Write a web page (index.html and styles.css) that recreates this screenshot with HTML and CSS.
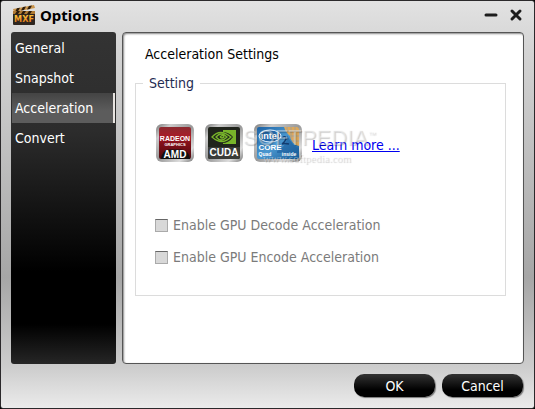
FILE: index.html
```html
<!DOCTYPE html>
<html lang="en">
<head>
    <meta charset="UTF-8">
    <meta name="viewport" content="width=device-width, initial-scale=1.0">
    <title>Options</title>
    <link rel="stylesheet" href="styles.css">
</head>
<body>
    <div class="window">
        <header class="titlebar">
            <svg class="logo" viewBox="0 0 24 20" aria-hidden="true">
                <defs>
                    <linearGradient id="gold" x1="0" y1="0" x2="0" y2="1">
                        <stop offset="0" stop-color="#ffd040"/>
                        <stop offset="1" stop-color="#e06a10"/>
                    </linearGradient>
                </defs>
                <path d="M1 4 L22 0 L23 3 L2 7 Z" fill="#c8934a"/>
                <path d="M5 3.2 L8 2.7 L6 6.2 L3 6.8 Z M11 2.1 L14 1.5 L12 5 L9 5.6 Z M17 1 L20 .4 L18 3.9 L15 4.5 Z" fill="#2b1c0c"/>
                <rect x="1" y="7" width="22" height="13" rx="1" fill="#2e2620"/>
                <rect x="1" y="6" width="22" height="3" fill="#b07a34"/>
                <path d="M5 6 h3 l-2 3 h-3 Z M11 6 h3 l-2 3 h-3 Z M17 6 h3 l-2 3 h-3 Z" fill="#2b1c0c"/>
                <text x="12" y="17" class="logo-text" fill="url(#gold)">MXF</text>
            </svg>
            <h1>Options</h1>
            <div class="window-controls">
                <button type="button" aria-label="Minimize">
                    <svg width="14" height="14" viewBox="0 0 14 14"><path d="M2 7 H12"/></svg>
                </button>
                <button type="button" aria-label="Close">
                    <svg width="14" height="14" viewBox="0 0 14 14"><path d="M3 3 L11 11 M11 3 L3 11"/></svg>
                </button>
            </div>
        </header>

        <div class="content">
            <nav class="sidebar">
                <a href="#general">General</a>
                <a href="#snapshot">Snapshot</a>
                <a href="#acceleration" class="active">Acceleration</a>
                <a href="#convert">Convert</a>
            </nav>

            <main class="panel">
                <h2>Acceleration Settings</h2>
                <fieldset>
                    <legend>Setting</legend>
                    <div class="badges">
                        <svg width="40" height="40" viewBox="0 0 40 40" role="img" aria-label="AMD Radeon Graphics">
                            <defs>
                                <linearGradient id="metal" x1="0" y1="0" x2="1" y2="1">
                                    <stop offset="0" stop-color="#777777"/>
                                    <stop offset=".2" stop-color="#cccccc"/>
                                    <stop offset=".5" stop-color="#999999"/>
                                    <stop offset=".8" stop-color="#dddddd"/>
                                    <stop offset="1" stop-color="#777777"/>
                                </linearGradient>
                                <linearGradient id="red" x1="0" y1="0" x2="0" y2="1">
                                    <stop offset="0" stop-color="#8c2a30"/>
                                    <stop offset=".3" stop-color="#a81c28"/>
                                    <stop offset=".5" stop-color="#84101a"/>
                                    <stop offset="1" stop-color="#4c080c"/>
                                </linearGradient>
                            </defs>
                            <rect x="1" y="1" width="38" height="38" rx="6" fill="url(#metal)"/>
                            <rect x="4" y="4" width="32" height="32" rx="2" fill="url(#red)"/>
                            <path d="M6 36 Q7 27 14 26.500 H26 Q34 27 35 36 Z" fill="#111"/>
                            <text x="20" y="18" class="radeon">RADEON</text>
                            <text x="20" y="23" class="graphics">GRAPHICS</text>
                            <text x="20" y="35" class="brand">AMD</text>
                        </svg>
                        <svg width="40" height="40" viewBox="0 0 40 40" role="img" aria-label="NVIDIA CUDA">
                            <rect x="1" y="1" width="38" height="38" rx="6" fill="url(#metal)"/>
                            <rect x="4" y="4" width="32" height="32" rx="2" fill="#20241c"/>
                            <path d="M4 24 H36 V34 Q36 36 34 36 H6 Q4 36 4 34 Z" fill="#3a3b38"/>
                            <path d="M19 7 H32 V21 H19 Z" fill="#78b52a"/>
                            <path d="M18 9 Q25 9 29 14 Q25 20 18 20 Z" fill="#20241c"/>
                            <path d="M8 14 Q16 5 27 14 Q18 23 8 14 Z M12 14 Q17 8 23 14 Q17 20 12 14 Z M16 14 q3 -3 4 0 q-2 2 -4 0" fill="none" stroke="#78b52a" stroke-width="1.3"/>
                            <text x="20" y="33" class="brand">CUDA</text>
                        </svg>
                        <svg width="50" height="40" viewBox="0 0 50 40" role="img" aria-label="Intel Core 2 Quad inside">
                            <defs>
                                <linearGradient id="blue" x1="0" y1="0" x2="1" y2="1">
                                    <stop offset="0" stop-color="#1d62a4"/>
                                    <stop offset=".5" stop-color="#4b98d0"/>
                                    <stop offset="1" stop-color="#155a96"/>
                                </linearGradient>
                            </defs>
                            <rect x="1" y="1" width="48" height="38" rx="6" fill="url(#metal)"/>
                            <rect x="4" y="4" width="42" height="32" rx="2" fill="url(#blue)"/>
                            <path d="M31 4 H44 Q46 4 46 6 V23 Q39 22 37 13 Q33 10 31 4 Z" fill="#dda85c"/>
                            <path d="M34 4 V9 M38 4 V16 M42 4 V21 M33 8 H46 M37 13 H46 M39 18 H46" stroke="#a8a08c" fill="none"/>
                            <path d="M24 28 Q34 24 34 12 Q40 24 46 25 V30 H24 Z" fill="#1c5f9f" opacity=".6"/>
                            <ellipse cx="17" cy="13" rx="11" ry="6" fill="#2468a8" stroke="#e8f4ff"/>
                            <text x="17" y="16" class="intel">intel</text>
                            <text x="17" y="27" class="core">CORE</text>
                            <path d="M29 15 Q33 12 33 16 Q32 19 29 21 Q32 20 36 21" fill="none" stroke="#123c70" stroke-width="1.5"/>
                            <text x="12" y="33" class="small">Quad</text>
                            <text x="36" y="33" class="small">inside</text>
                        </svg>
                        <a href="#learn-more">Learn more ...</a>
                        <div class="watermark" aria-hidden="true">
                            <span class="watermark-name">SOFTPEDIA<sup>™</sup></span>
                            <span class="watermark-site">www.softpedia.com</span>
                        </div>
                    </div>
                    <label class="check"><input type="checkbox" disabled>Enable GPU Decode Acceleration</label>
                    <label class="check"><input type="checkbox" disabled>Enable GPU Encode Acceleration</label>
                </fieldset>
            </main>
        </div>

        <footer class="actions">
            <button type="button">OK</button>
            <button type="button">Cancel</button>
        </footer>
    </div>
</body>
</html>
```

FILE: styles.css
```css
* {
    box-sizing: border-box;
}

body {
    margin: 0;
    background: #000;
    font-family: "DejaVu Sans Condensed", "Noto Sans", sans-serif;
    font-size: 14px;
    line-height: 20px;
}

.window {
    display: flex;
    flex-direction: column;
    min-height: 100vh;
    padding: 0 10px;
    border: 1px solid #2b292b;
    border-radius: 3px;
    background: linear-gradient(#e2e2e2 0%, #d4d4d4 12%, #a6a6a6 68%, #cdcdcd 90%, #ebebeb 100%);
}

.titlebar {
    display: flex;
    align-items: center;
    height: 31px;
    padding: 0 1px 3px;
}

.logo {
    width: 24px;
    height: 20px;
}

.logo-text {
    font-size: 9px;
    font-weight: bold;
    text-anchor: middle;
}

h1 {
    margin: 0 auto 0 4px;
    font-family: "Noto Sans", sans-serif;
    font-size: 15px;
}

.window-controls {
    display: flex;
    gap: 11px;
}

.window-controls button {
    display: flex;
    padding: 0;
    border: 0;
    background: none;
}

.window-controls path {
    fill: none;
    stroke: #1c1c1c;
    stroke-width: 3;
    stroke-linecap: round;
}

.content {
    display: flex;
    flex: 1;
    gap: 6px;
}

.sidebar {
    width: 105px;
    padding: 1px 1px 0;
    border-radius: 3px;
    background: linear-gradient(#333 0%, #2c2c2c 30%, #000 72%, #000 88%, #262626 100%);
}

.sidebar a {
    display: block;
    padding: 5px 3px;
    color: #fff;
    text-decoration: none;
}

.sidebar .active {
    border-right: 2px solid #e8e4e0;
    background: linear-gradient(#444, #5c5c5c 60%);
}

.panel {
    flex: 1;
    padding: 11px 17px 0 12px;
    border: 1px solid #555;
    border-radius: 4px;
    background: #fff;
    box-shadow: inset 1px 1px 2px #888;
}

h2 {
    margin: 0 0 9px 10px;
    font-size: 14px;
    font-weight: normal;
}

fieldset {
    margin: 0;
    padding: 30px 19px 16px;
    border: 1px solid #dcdcdc;
}

legend {
    margin-left: -12px;
    padding: 0 6px;
    color: #1f2c52;
}

.badges {
    position: relative;
    display: flex;
    align-items: center;
    gap: 9px;
    margin-bottom: 52px;
}

.badges a {
    padding-top: 4px;
    color: #0000f0;
}

.badges text {
    fill: #fff;
    font-family: "Liberation Sans", sans-serif;
    font-weight: bold;
    text-anchor: middle;
}

.badges .radeon {
    font-size: 7px;
}

.badges .graphics {
    font-size: 4px;
}

.badges .brand {
    font-size: 10px;
}

.badges .intel {
    font-size: 9px;
}

.badges .core {
    font-size: 8px;
}

.badges .small {
    font-size: 5px;
}

/* sits over the badges and the link */
.watermark {
    position: absolute;
    top: 2px;
    left: 88px;
    color: rgba(255, 255, 255, 0.4);
    text-shadow: 1px 1px 1px rgba(0, 0, 0, 0.2);
    pointer-events: none;
}

.watermark-name {
    display: block;
    font-family: "Liberation Sans", sans-serif;
    font-size: 22px;
}

.watermark-name sup {
    font-size: 8px;
}

.watermark-site {
    display: block;
    margin-left: 20px;
    font-family: "Liberation Serif", serif;
    font-size: 11px;
}

.check {
    display: flex;
    align-items: center;
    gap: 5px;
    margin-bottom: 12px;
    color: #7b7b7b;
}

.check input {
    width: 13px;
    height: 13px;
    margin: 0;
    border: 1px solid #aaa;
    border-top: 1px solid #666;
    background: #d8d8d8;
    appearance: none;
}

.actions {
    display: flex;
    justify-content: flex-end;
    gap: 7px;
    padding: 10px 1px 11px;
}

.actions button {
    width: 81px;
    height: 23px;
    padding: 0;
    border: 0;
    border-radius: 10px;
    background: linear-gradient(#333, #000 70%);
    box-shadow: 1px 1px 1px #777;
    color: #fff;
    font: inherit;
}
```
